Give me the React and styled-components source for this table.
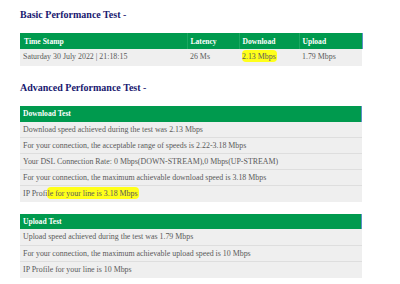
import React from "react";
import styled, { createGlobalStyle } from "styled-components";

const Global = createGlobalStyle`
  html, body { margin: 0; padding: 0; background: #ffffff; }
  body { font-family: "Liberation Serif", "Times New Roman", serif; }
`;

const Page = styled.div`
  width: 400px;
  height: 284px;
  box-sizing: border-box;
  padding: 8px 38px 0 20px;
  display: flex;
  flex-direction: column;
  overflow: hidden;
`;

const Heading = styled.h2`
  margin: 0 0 ${(p) => p.$gap}px 0;
  height: 14px;
  line-height: 14px;
  font-size: 10px;
  font-weight: bold;
  color: #191970;
  span { font-weight: normal; }
`;

const Table = styled.table`
  width: 342px;
  border-collapse: collapse;
  table-layout: fixed;
  margin-bottom: ${(p) => p.$gap}px;
  font-size: 7.9px;
`;

const Th = styled.th`
  background: #009a4e;
  color: #ffffff;
  text-align: left;
  font-weight: bold;
  font-size: 7.6px;
  height: ${(p) => p.$h || 16}px;
  padding: 0 0 0 ${(p) => p.$pl || 3}px;
  border-left: ${(p) => (p.$sep ? "1px solid #1aa861" : "none")};
  border-right: ${(p) => (p.$edge ? "1px solid #5b8fc6" : "none")};
  box-sizing: border-box;
`;

const Td = styled.td`
  background: #efefef;
  color: #5a5a5a;
  height: 16px;
  padding: 0 0 0 ${(p) => p.$pl || 3}px;
  border-bottom: 1px solid ${(p) => (p.$last ? "#efefef" : "#dedede")};
  box-sizing: border-box;
  white-space: nowrap;
  overflow: hidden;
`;

const Mark = styled.span`
  background: #ffff1a;
  border-radius: 4px;
  padding: 2px 1px 1px 0;
`;

const downloadRows = [
  "Download speed achieved during the test was 2.13 Mbps",
  "For your connection, the acceptable range of speeds is  2.22-3.18 Mbps",
  "Your DSL Connection Rate: 0 Mbps(DOWN-STREAM),0 Mbps(UP-STREAM)",
  "For your connection, the maximum achievable download speed is 3.18 Mbps",
];

const uploadRows = [
  "Upload speed achieved during the test was 1.79 Mbps",
  "For your connection, the maximum achievable upload speed is 10 Mbps",
  "IP Profile for your line is 10 Mbps",
];

export default function App() {
  return (
    <>
      <Global />
      <Page>
        <Heading $gap={11}>
          Basic Performance Test <span>-</span>
        </Heading>
        <Table $gap={15}>
          <colgroup>
            <col style={{ width: 167 }} />
            <col style={{ width: 52 }} />
            <col style={{ width: 60 }} />
            <col style={{ width: 63 }} />
          </colgroup>
          <thead>
            <tr>
              <Th $pl={4}>Time Stamp</Th>
              <Th $sep>Latency</Th>
              <Th $sep>Download</Th>
              <Th $sep $edge>Upload</Th>
            </tr>
          </thead>
          <tbody>
            <tr>
              <Td $pl={3} $last>Saturday 30 July 2022 | 21:18:15</Td>
              <Td $last>26 Ms</Td>
              <Td $last>
                <Mark>2.13 Mbps</Mark>
              </Td>
              <Td $last>1.79 Mbps</Td>
            </tr>
          </tbody>
        </Table>
        <Heading $gap={11}>
          Advanced Performance Test <span>-</span>
        </Heading>
        <Table $gap={12}>
          <thead>
            <tr>
              <Th $edge>Download Test</Th>
            </tr>
          </thead>
          <tbody>
            {downloadRows.map((r) => (
              <tr key={r}>
                <Td>{r}</Td>
              </tr>
            ))}
            <tr>
              <Td $last>
                IP Profi<Mark>le for your line is 3.18 Mbps</Mark>
              </Td>
            </tr>
          </tbody>
        </Table>
        <Table $gap={0}>
          <thead>
            <tr>
              <Th $edge $h={15}>Upload Test</Th>
            </tr>
          </thead>
          <tbody>
            {uploadRows.map((r, i) => (
              <tr key={r}>
                <Td $last={i === uploadRows.length - 1}>{r}</Td>
              </tr>
            ))}
          </tbody>
        </Table>
      </Page>
    </>
  );
}
